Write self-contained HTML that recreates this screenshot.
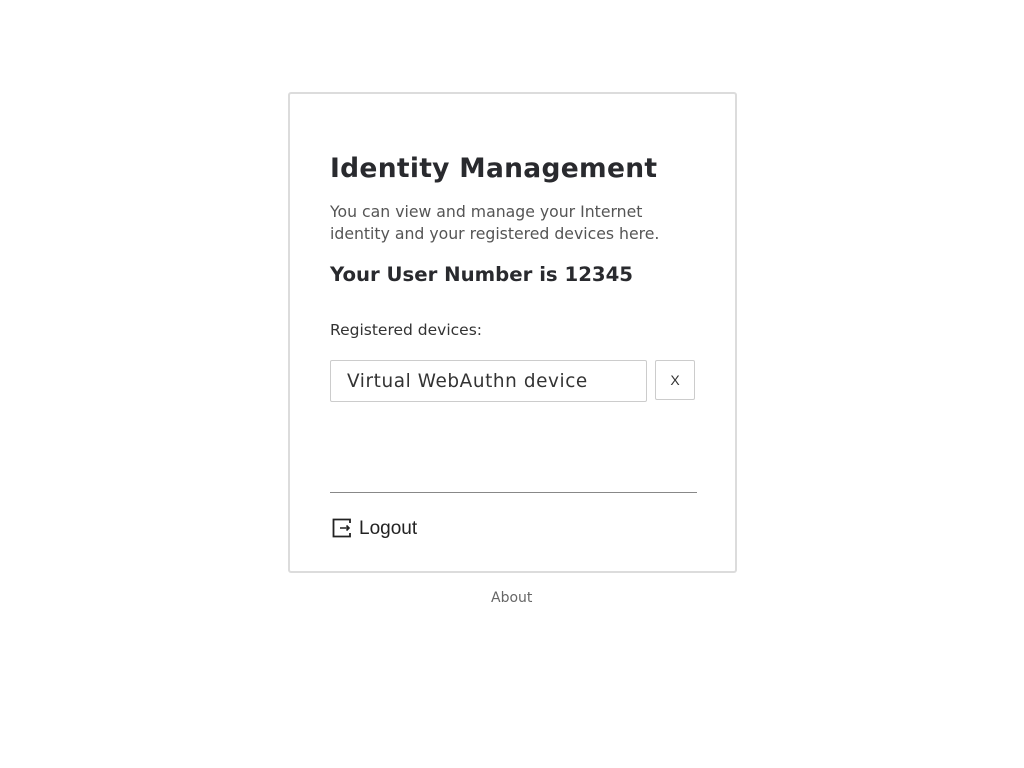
<!DOCTYPE html>
<html><head><meta charset="utf-8"><style>
*{box-sizing:border-box;margin:0;padding:0}
body{width:1024px;height:768px;background:#fff;font-family:"DejaVu Sans","Liberation Sans",sans-serif;color:#292a2e;position:relative;overflow:hidden}
.card{position:absolute;left:288px;top:92px;width:449px;height:481px;border:2px solid #dcdcdc;border-radius:3px}
.abs{position:absolute;white-space:nowrap}
h1{font-size:26.5px;font-weight:bold;left:330px;top:153px;letter-spacing:0.3px}
.desc{left:330px;top:201px;font-size:15.7px;line-height:22px;color:#555}
.un{left:330px;top:263px;font-size:19.7px;font-weight:bold}
.rd{left:330px;top:321px;font-size:15.5px;color:#333}
.inp{left:330px;top:360px;width:317px;height:42px;border:1px solid #ccc;border-radius:2px;font-size:18.4px;letter-spacing:0.6px;padding:10px 0 0 16px;color:#333}
.x{left:655px;top:360px;width:40px;height:40px;border:1px solid #ccc;border-radius:2px;font-size:14px;text-align:center;line-height:38px;color:#333;font-family:"Liberation Sans",sans-serif}
.hr{left:330px;top:492px;width:367px;height:1px;background:#888}
.lo{left:359px;top:518px;font-family:"Liberation Sans",sans-serif;font-size:19px;color:#222}
.ab{left:491px;top:590px;font-size:14px;color:#666;font-family:"DejaVu Sans",sans-serif}
</style></head><body>
<div class="card"></div>
<h1 class="abs">Identity Management</h1>
<div class="abs desc">You can view and manage your Internet<br>identity and your registered devices here.</div>
<div class="abs un">Your User Number is 12345</div>
<div class="abs rd">Registered devices:</div>
<div class="abs inp">Virtual WebAuthn device</div>
<div class="abs x">X</div>
<div class="abs hr"></div>
<svg class="abs" style="left:332px;top:518px" width="20" height="20" viewBox="0 0 20 20"><path d="M18 5V1.5H1.5v17H18V15" fill="none" stroke="#222" stroke-width="1.8"/><path d="M8 10h9M14.5 7.5l2.5 2.5-2.5 2.5" fill="none" stroke="#222" stroke-width="1.6"/></svg>
<div class="abs lo">Logout</div>
<div class="abs ab">About</div>
</body></html>
